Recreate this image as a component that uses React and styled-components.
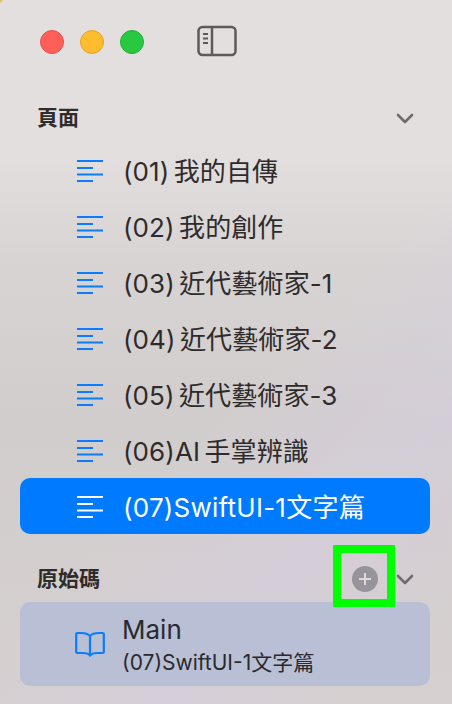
import React from 'react';
import styled, { createGlobalStyle } from 'styled-components';

const Global = createGlobalStyle`
    html, body {
        margin: 0;
        padding: 0;
    }
    body {
        font-family: Inter, "Noto Sans CJK TC", sans-serif;
    }
`;

const Sidebar = styled.div`
    width: 452px;
    height: 704px;
    box-sizing: border-box;
    padding: 26px 22px 0 20px;
    overflow: hidden;
    background:
        radial-gradient(circle at 0 0, #e3c35a 0 2px, transparent 3px),
        linear-gradient(135deg, rgba(214, 205, 228, 0) 55%, rgba(214, 205, 228, 0.45) 75%, rgba(214, 205, 228, 0) 92%),
        linear-gradient(180deg, #e4dfdf 0, #e4dfdf 150px, #d8d4d4 260px, #d2cdcd 420px, #d6d0d0 704px);
`;

const TitleBar = styled.div`
    display: flex;
    align-items: center;
    height: 30px;
    padding-left: 20px;
`;

const Light = styled.span`
    width: 24px;
    height: 24px;
    box-sizing: border-box;
    border-radius: 50%;
    margin-right: 16px;
    margin-top: 2px;
    background: ${p => p.$fill};
    border: 1px solid ${p => p.$edge};
`;

const ToggleIcon = styled.svg`
    width: 40px;
    height: 32px;
    margin-left: 37px;
    margin-top: -1px;
`;

const Section = styled.div`
    display: flex;
    align-items: center;
    height: 40px;
    padding-left: 17px;
    margin-top: ${p => p.$top}px;
    position: relative;
`;

const SectionTitle = styled.h2`
    margin: 0;
    flex: 1;
    font-size: 21px;
    font-weight: 700;
    line-height: 40px;
    color: #2f2c2c;
`;

const PlusButton = styled.span`
    width: 26px;
    height: 26px;
    border-radius: 50%;
    background: #96949a;
    display: flex;
    align-items: center;
    justify-content: center;
    margin-right: 18px;
`;

const Chevron = styled.svg`
    width: 18px;
    height: 11px;
    margin-right: 16px;
`;

// annotation drawn over the screenshot
const Marker = styled.div`
    position: absolute;
    left: 313px;
    top: -14px;
    width: 62px;
    height: 62px;
    box-sizing: border-box;
    border: 8px solid #00ff00;
`;

const List = styled.ul`
    list-style: none;
    margin: 4px 0 0;
    padding: 0;
`;

const Row = styled.li`
    height: 56px;
    display: flex;
    align-items: center;
    padding-left: 57px;
    border-radius: 10px;
    background: ${p => (p.$selected ? '#007aff' : 'transparent')};
    color: ${p => (p.$selected ? '#ffffff' : '#2e2b2b')};
    font-size: 26px;
    white-space: pre;
`;

const RowLabel = styled.span`
    padding-bottom: 2px;
    margin-left: -1px;
    word-spacing: -3px;
    letter-spacing: ${p => (p.$wide ? 0.25 : 0.1)}px;
`;

const LinesIcon = styled.svg`
    width: 26px;
    height: 24px;
    flex: none;
    margin-right: 21px;
`;

const SourceRow = styled.div`
    height: 84px;
    margin-top: 3px;
    display: flex;
    align-items: center;
    padding-left: 55px;
    border-radius: 10px;
    background: #b9c0d6;
    color: #2a2a2e;
`;

const BookIcon = styled.svg`
    width: 30px;
    height: 26px;
    flex: none;
    margin-right: 18px;
`;

const SourceText = styled.div`
    display: flex;
    flex-direction: column;
    margin-left: -1px;
    margin-top: 1px;
`;

const SourceName = styled.span`
    font-size: 26px;
    line-height: 36px;
`;

const SourceSub = styled.span`
    font-size: 21px;
    line-height: 30px;
`;

const pages = [
    '(01) 我的自傳',
    '(02) 我的創作',
    '(03) 近代藝術家-1',
    '(04) 近代藝術家-2',
    '(05) 近代藝術家-3',
    '(06)AI 手掌辨識',
    '(07)SwiftUI-1文字篇',
];

const Lines = ( { color } ) =>
    <LinesIcon viewBox="0 0 26 24" fill="none" stroke={ color } strokeWidth="2">
        <path d="M0 3h26M0 10h16M0 16.500h26M0 23h16" />
    </LinesIcon>;

const ChevronDown = () =>
    <Chevron viewBox="0 0 18 11" fill="none" stroke="#706c6c" strokeWidth="2.600" strokeLinecap="round" strokeLinejoin="round">
        <path d="M2 2l7 7 7-7" />
    </Chevron>;

const App = () =>
    <Sidebar>
        <Global />
        <TitleBar>
            <Light $fill="#ff5f57" $edge="#e5504a" />
            <Light $fill="#febc2e" $edge="#e5a323" />
            <Light $fill="#28c840" $edge="#22ad36" />
            <ToggleIcon viewBox="0 0 40 32" fill="none">
                <rect x="1.500" y="2" width="37" height="28" rx="4" stroke="#5f5a59" strokeWidth="2.500" />
                <path d="M15 2v28" stroke="#5f5a59" strokeWidth="2.500" />
                <path d="M6 9h5M6 13.500h5M6 18h5" stroke="#5f5a59" strokeWidth="1.800" />
            </ToggleIcon>
        </TitleBar>
        <Section $top={ 42 }>
            <SectionTitle>頁面</SectionTitle>
            <ChevronDown />
        </Section>
        <List>
            { pages.map( ( text, i ) =>
                <Row key={ text } $selected={ i === 6 }>
                    <Lines color={ i === 6 ? '#ffffff' : '#0a7cff' } />
                    <RowLabel $wide={ i === 6 }>{ text }</RowLabel>
                </Row>
            ) }
        </List>
        <Section $top={ 25 }>
            <SectionTitle>原始碼</SectionTitle>
            <PlusButton>
                <svg width="14" height="14" viewBox="0 0 14 14" stroke="#dcdadb" strokeWidth="2">
                    <path d="M7 1v12M1 7h12" />
                </svg>
            </PlusButton>
            <ChevronDown />
            <Marker />
        </Section>
        <SourceRow>
            <BookIcon viewBox="0 0 30 26" fill="none" stroke="#0a7cff" strokeWidth="2.200" strokeLinejoin="round">
                <path d="M15 5C13 2.500 10 2 6 2H2.500C1.700 2 1.200 2.500 1.200 3.300V21c0 .6.400 1 1 1H8c3 0 5.500.5 7 2.500 1.500-2 4-2.500 7-2.500h5.800c.6 0 1-.4 1-1V3.300c0-.8-.5-1.300-1.300-1.300H24c-4 0-7 .5-9 3zM15 5v19" />
            </BookIcon>
            <SourceText>
                <SourceName>Main</SourceName>
                <SourceSub>(07)SwiftUI-1文字篇</SourceSub>
            </SourceText>
        </SourceRow>
    </Sidebar>;

export default App;
